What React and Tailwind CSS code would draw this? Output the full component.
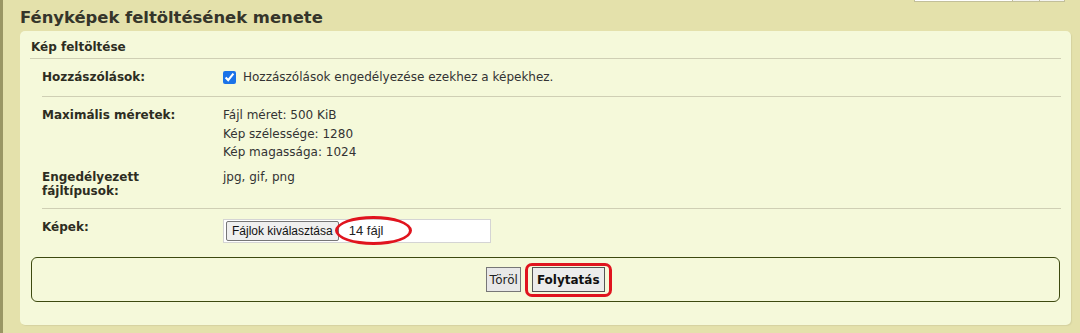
const font = { fontFamily: '"DejaVu Sans", Verdana, sans-serif' };

function Row({ label, children, border = true, className = '' }) {
  return (
    <div className={`flex ${border ? 'border-b border-[#cfcfb4]' : ''} ${className}`}>
      <div className="w-[181px] shrink-0 font-bold text-[12px] leading-[14px] text-[#2d2d22]">{label}</div>
      <div className="flex-1 text-[12px] text-[#333]">{children}</div>
    </div>
  );
}

export default function App() {
  return (
    <div className="min-h-[333px] bg-[#e4e1ab] border-l-[3px] border-[#9a9664] text-[#333]" style={font}>
      {/* cut-off controls at the top right */}
      <div className="flex justify-end h-[2px] pr-[15px]">
        <div className="w-[99px] border border-t-0 border-[#c2bf9a] bg-white" />
        <div className="w-[27px] border border-t-0 border-l-0 border-[#c2bf9a] bg-[#f4f4f0]" />
        <div className="w-[25px] border border-t-0 border-l-0 border-[#c2bf9a] bg-[#f4f4f0]" />
      </div>

      <h1 className="pl-[17px] pt-[5px] h-[29px] text-[16.4px] leading-[22px] font-bold text-[#35352a]">
        Fényképek feltöltésének menete
      </h1>

      <div className="ml-[17px] mr-[9px] h-[294px] bg-[#f5f9da] rounded-[5px] shadow-[1px_1px_1px_#d5d2a0] px-[10px] pt-[8px]">
        <div className="border-b border-[#cfcfb4] pl-[1px] pb-[3px] text-[12px] leading-[16px] font-bold text-[#2d2d22]">
          Kép feltöltése
        </div>

        <div className="pl-[12px]">
          <Row label="Hozzászólások:" className="pt-[11px] h-[38px]">
            <label className="flex items-center gap-[7px] leading-[14px]">
              <input type="checkbox" defaultChecked className="w-[13px] h-[13px] m-0 accent-[#1a73e8]" />
              Hozzászólások engedélyezése ezekhez a képekhez.
            </label>
          </Row>

          <Row label="Maximális méretek:" border={false} className="pt-[11px]">
            <div className="leading-[18.5px] -mt-[2px]">
              <div>Fájl méret: 500 KiB</div>
              <div>Kép szélessége: 1280</div>
              <div>Kép magassága: 1024</div>
            </div>
          </Row>

          <Row label={<>Engedélyezett<br />fájltípusok:</>} className="pt-[8px] h-[47px]">
            <div className="leading-[14px]">jpg, gif, png</div>
          </Row>

          <Row label="Képek:" border={false} className="pt-[11px] h-[48px]">
            <div className="-mt-[1px] w-[268px] h-[24px] bg-white border border-[#d4d4d4] flex items-center pl-[2px] relative" style={{ fontFamily: '"Liberation Sans", Arial, sans-serif' }}>
              <span className="h-[20px] px-[5px] flex items-center bg-[#efefef] border border-[#767676] rounded-[2px] text-[12px] text-[#111]">
                Fájlok kiválasztása
              </span>
              <span className="ml-[10px] text-[13px] text-[#222]">14 fájl</span>
              <span className="absolute left-[111px] top-[-4px] w-[77px] h-[29px] rounded-[50%] border-[3px] border-[#e0141e]" />
            </div>
          </Row>
        </div>

        <div className="ml-[1px] mr-[1px] h-[45px] border border-[#3d4a0f] rounded-[6px] flex items-center justify-center gap-[11px] pt-[1px]">
          <button className="h-[25px] px-[2px] bg-[#e8e8e8] border border-[#777] text-[12px] text-[#222]">Töröl</button>
          <span className="relative">
            <button className="h-[25px] px-[4px] bg-[#ececec] border border-[#555] text-[12px] font-bold text-[#111]">Folytatás</button>
            <span className="absolute -left-[7px] -top-[4px] -right-[7px] -bottom-[5px] rounded-[7px] border-[3px] border-[#e0141e]" />
          </span>
        </div>
      </div>
    </div>
  );
}
